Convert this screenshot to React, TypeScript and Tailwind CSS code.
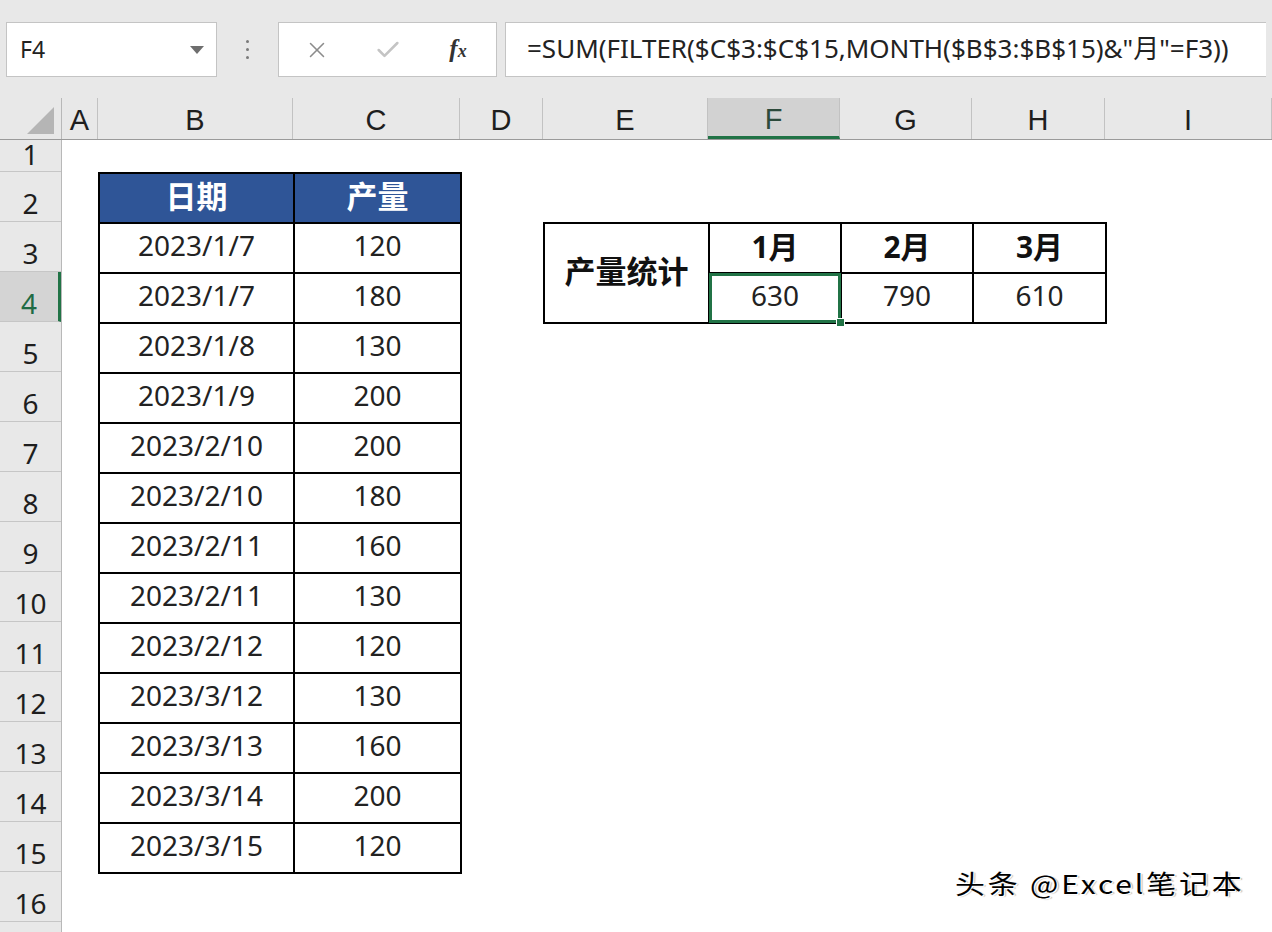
import { X, Check } from "lucide-react";

const COL_HEADERS = [
  { label: "A", w: "w-[36px]" },
  { label: "B", w: "w-[195px]" },
  { label: "C", w: "w-[167px]" },
  { label: "D", w: "w-[83px]" },
  { label: "E", w: "w-[165px]" },
  { label: "F", w: "w-[132px]", active: true },
  { label: "G", w: "w-[132px]" },
  { label: "H", w: "w-[133px]" },
  { label: "I", w: "w-[167px]" },
];

const DATA: [string, number][] = [
  ["2023/1/7", 120],
  ["2023/1/7", 180],
  ["2023/1/8", 130],
  ["2023/1/9", 200],
  ["2023/2/10", 200],
  ["2023/2/10", 180],
  ["2023/2/11", 160],
  ["2023/2/11", 130],
  ["2023/2/12", 120],
  ["2023/3/12", 130],
  ["2023/3/13", 160],
  ["2023/3/14", 200],
  ["2023/3/15", 120],
];

const ROWS = Array.from({ length: 16 }, (_, i) => i + 1);

const cellFont = "font-['Noto_Sans','Noto_Sans_CJK_SC',sans-serif]";

function FormulaBar() {
  return (
    <div className="flex h-[98px] items-start bg-[#e8e8e8] px-[6px] pt-[22px]">
      <div className="flex h-[55px] w-[211px] items-center justify-between border border-[#c4c4c4] bg-white pl-[13px] pr-[12px]">
        <span className="font-['Noto_Sans',sans-serif] text-[23px] text-[#222]">F4</span>
        <svg width="14" height="8" viewBox="0 0 14 8">
          <path d="M0 0 H14 L7 8 Z" fill="#6e6e6e" />
        </svg>
      </div>
      <div className="flex h-[55px] w-[61px] flex-col items-center justify-center gap-[5px]">
        <span className="h-[3px] w-[3px] rounded-full bg-[#7a7a7a]" />
        <span className="h-[3px] w-[3px] rounded-full bg-[#7a7a7a]" />
        <span className="h-[3px] w-[3px] rounded-full bg-[#7a7a7a]" />
      </div>
      <div className="flex h-[55px] w-[219px] items-center border border-[#c4c4c4] bg-white">
        <span className="flex w-[74px] justify-center pl-[2px]">
          <X size={26} strokeWidth={1.4} color="#8c8c8c" />
        </span>
        <span className="flex w-[70px] justify-center">
          <Check size={28} strokeWidth={2.2} color="#c4c4c4" />
        </span>
        <span className="flex w-[70px] justify-center pb-[2px]">
          <span className="font-['Liberation_Serif',serif] text-[25px] font-bold italic text-[#333]">
            f<span className="text-[18px]">x</span>
          </span>
        </span>
      </div>
      <div className="ml-[8px] flex h-[55px] flex-1 items-center border border-r-0 border-[#c4c4c4] bg-white pb-[3px] pl-[21px]">
        <span className={`${cellFont} text-[26px] tracking-[0px] text-[#222]`}>
          =SUM(FILTER($C$3:$C$15,MONTH($B$3:$B$15)&"月"=F3))
        </span>
      </div>
    </div>
  );
}

function ColumnHeaders() {
  return (
    <div className="flex h-[42px] border-b border-[#9a9a9a] bg-[#e8e8e8]">
      <div className="relative w-[62px] border-r border-[#b8b8b8]">
        <svg className="absolute bottom-[5px] right-[7px]" width="27" height="27" viewBox="0 0 27 27">
          <path d="M27 0 V27 H0 Z" fill="#b5b5b5" />
        </svg>
      </div>
      {COL_HEADERS.map((c) => (
        <div
          key={c.label}
          className={`${c.w} flex items-center justify-center border-r border-[#c2c2c2] pt-[5px] font-['Liberation_Sans',sans-serif] text-[29px] ${
            c.active
              ? "border-b-[3px] border-b-[#217346] bg-[#d2d2d2] text-[#2c4a3b]"
              : "text-[#1e1e1e]"
          }`}
        >
          {c.label}
        </div>
      ))}
    </div>
  );
}

function RowHeaders() {
  return (
    <div className="flex w-[62px] flex-col border-r border-[#b8b8b8] bg-[#e8e8e8]">
      {ROWS.map((r) => (
        <div
          key={r}
          className={`flex shrink-0 items-center justify-center border-b border-[#c6c6c6] ${cellFont} text-[28px] ${
            r === 1 ? "h-[32px] pb-[4px]" : "h-[50px] pt-[12px]"
          } ${r === 4 ? "border-r-[3px] border-r-[#217346] bg-[#d4d4d4] text-[#1f6b45]" : "text-[#1e1e1e]"}`}
        >
          {r}
        </div>
      ))}
      <div className="h-[12px] shrink-0" />
    </div>
  );
}

function DataTable() {
  return (
    <table className={`col-start-2 col-end-4 row-start-2 row-end-16 h-full w-full table-fixed border-collapse ${cellFont} text-[28px] leading-[1.2]`}>
      <colgroup>
        <col className="w-[195px]" />
        <col className="w-[167px]" />
      </colgroup>
      <thead>
        <tr className="h-[50px] bg-[#2f5597] text-white">
          <th className="border-2 border-black p-0 pb-[3px] text-[31px] font-bold">日期</th>
          <th className="border-2 border-black p-0 pb-[3px] text-[31px] font-bold">产量</th>
        </tr>
      </thead>
      <tbody>
        {DATA.map(([d, v], i) => (
          <tr key={i} className="h-[50px] text-[#222]">
            <td className="border-2 border-black p-0 pb-[4px] text-center">{d}</td>
            <td className="border-2 border-black p-0 pb-[4px] text-center">{v}</td>
          </tr>
        ))}
      </tbody>
    </table>
  );
}

function StatsTable() {
  return (
    <table className={`col-start-5 col-end-9 row-start-3 row-end-5 h-full w-full table-fixed border-collapse ${cellFont} text-[28px] leading-[1.2] text-[#111]`}>
      <colgroup>
        <col className="w-[165px]" />
        <col className="w-[132px]" />
        <col className="w-[132px]" />
        <col className="w-[133px]" />
      </colgroup>
      <tbody>
        <tr className="h-[50px]">
          <td rowSpan={2} className="border-2 border-black p-0 pb-[2px] text-center text-[31px] font-bold">
            产量统计
          </td>
          <td className="border-2 border-black p-0 pb-[3px] text-center text-[30px] font-bold">1月</td>
          <td className="border-2 border-black p-0 pb-[3px] text-center text-[30px] font-bold">2月</td>
          <td className="border-2 border-black p-0 pb-[3px] text-center text-[30px] font-bold">3月</td>
        </tr>
        <tr className="h-[50px] text-[#222]">
          <td className="relative border-2 border-black p-0 pb-[4px] text-center">
            630
            <div className="absolute -inset-[1px] border-[3px] border-[#217346]" />
            <div className="absolute -bottom-[5px] -right-[5px] h-[9px] w-[9px] border border-white bg-[#217346]" />
          </td>
          <td className="border-2 border-black p-0 pb-[4px] text-center">790</td>
          <td className="border-2 border-black p-0 pb-[4px] text-center">610</td>
        </tr>
      </tbody>
    </table>
  );
}

export default function App() {
  return (
    <div className="relative h-[932px] w-[1272px] overflow-hidden bg-white">
      <FormulaBar />
      <ColumnHeaders />
      <div className="flex">
        <RowHeaders />
        <div className="grid flex-1 grid-cols-[36px_195px_167px_83px_165px_132px_132px_133px_167px] grid-rows-[32px_repeat(15,50px)] bg-white">
          <DataTable />
          <StatsTable />
        </div>
      </div>
      <div className="absolute left-[955px] top-[870px] origin-left scale-x-[1.15] font-['Noto_Sans_CJK_SC',sans-serif] text-[26px] leading-none tracking-[2.5px] text-black [text-shadow:1px_1px_0_#fff,-1px_-1px_0_#fff,2px_1px_1px_#bbb]">
        头条 @Excel笔记本
      </div>
    </div>
  );
}
